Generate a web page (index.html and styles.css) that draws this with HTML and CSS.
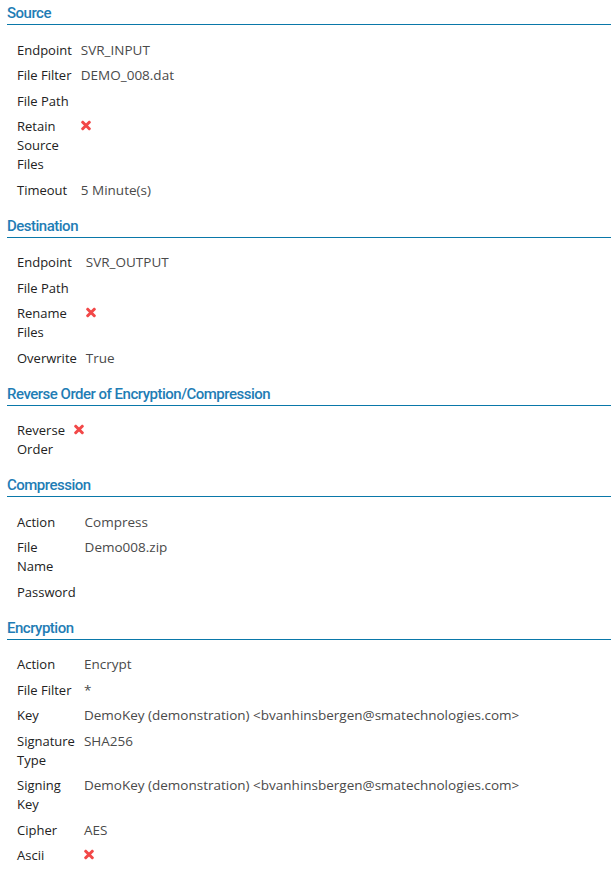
FILE: index.html
```html
<!DOCTYPE html>
<html>
<head>
<meta charset="utf-8">
<link rel="stylesheet" href="styles.css">
</head>
<body>
<section class="section">
  <h2 class="heading">Source</h2>
  <div class="fields">
    <div class="label">Endpoint</div><div class="value">SVR_INPUT</div>
    <div class="label">File Filter</div><div class="value">DEMO_008.dat</div>
    <div class="label">File Path</div><div class="value"></div>
    <div class="label">Retain Source Files</div><div class="value"><span class="cross"></span></div>
    <div class="label">Timeout</div><div class="value">5 Minute(s)</div>
  </div>
</section>
<section class="section">
  <h2 class="heading">Destination</h2>
  <div class="fields">
    <div class="label">Endpoint</div><div class="value">SVR_OUTPUT</div>
    <div class="label">File Path</div><div class="value"></div>
    <div class="label">Rename Files</div><div class="value"><span class="cross"></span></div>
    <div class="label">Overwrite</div><div class="value">True</div>
  </div>
</section>
<section class="section">
  <h2 class="heading">Reverse Order of Encryption/Compression</h2>
  <div class="fields">
    <div class="label">Reverse Order</div><div class="value"><span class="cross"></span></div>
  </div>
</section>
<section class="section">
  <h2 class="heading">Compression</h2>
  <div class="fields">
    <div class="label">Action</div><div class="value">Compress</div>
    <div class="label">File Name</div><div class="value">Demo008.zip</div>
    <div class="label">Password</div><div class="value"></div>
  </div>
</section>
<section class="section">
  <h2 class="heading">Encryption</h2>
  <div class="fields">
    <div class="label">Action</div><div class="value">Encrypt</div>
    <div class="label">File Filter</div><div class="value">*</div>
    <div class="label">Key</div><div class="value">DemoKey (demonstration) &lt;bvanhinsbergen@smatechnologies.com&gt;</div>
    <div class="label">Signature Type</div><div class="value">SHA256</div>
    <div class="label">Signing Key</div><div class="value">DemoKey (demonstration) &lt;bvanhinsbergen@smatechnologies.com&gt;</div>
    <div class="label">Cipher</div><div class="value">AES</div>
    <div class="label">Ascii</div><div class="value"><span class="cross"></span></div>
  </div>
</section>
</body>
</html>
```
FILE: styles.css
```css
html, body {
  margin: 0;
  padding: 0;
  background: #ffffff;
}
body {
  padding-left: 7px;
  font-family: "Open Sans", "Liberation Sans", sans-serif;
}
.section {
  margin: 0 0 13px 0;
}
.heading {
  margin: 0;
  padding: 4px 0 1px 0;
  font-family: Roboto, "Liberation Sans", sans-serif;
  font-weight: 500;
  font-size: 15px;
  letter-spacing: -0.5px;
  line-height: 19px;
  color: #1f7db5;
  border-bottom: 1px solid #0a78a9;
}
.fields {
  display: grid;
  grid-template-columns: min-content 1fr;
  column-gap: 9px;
  row-gap: 6.5px;
  padding: 15.5px 0 0 10px;
}
.label {
  font-size: 13px;
  line-height: 19px;
  color: #222;
}
.value {
  font-size: 13.5px;
  line-height: 19px;
  color: #4a4a4a;
  white-space: nowrap;
}
.cross {
  display: inline-block;
  width: 10px;
  height: 10px;
  position: relative;
  vertical-align: top;
  margin-top: 3px;
}
.cross::before, .cross::after {
  content: "";
  position: absolute;
  left: -1px;
  top: 3.5px;
  width: 12px;
  height: 3px;
  background: #f24848;
  border-radius: 1px;
}
.cross::before { transform: rotate(45deg); }
.cross::after { transform: rotate(-45deg); }
```
